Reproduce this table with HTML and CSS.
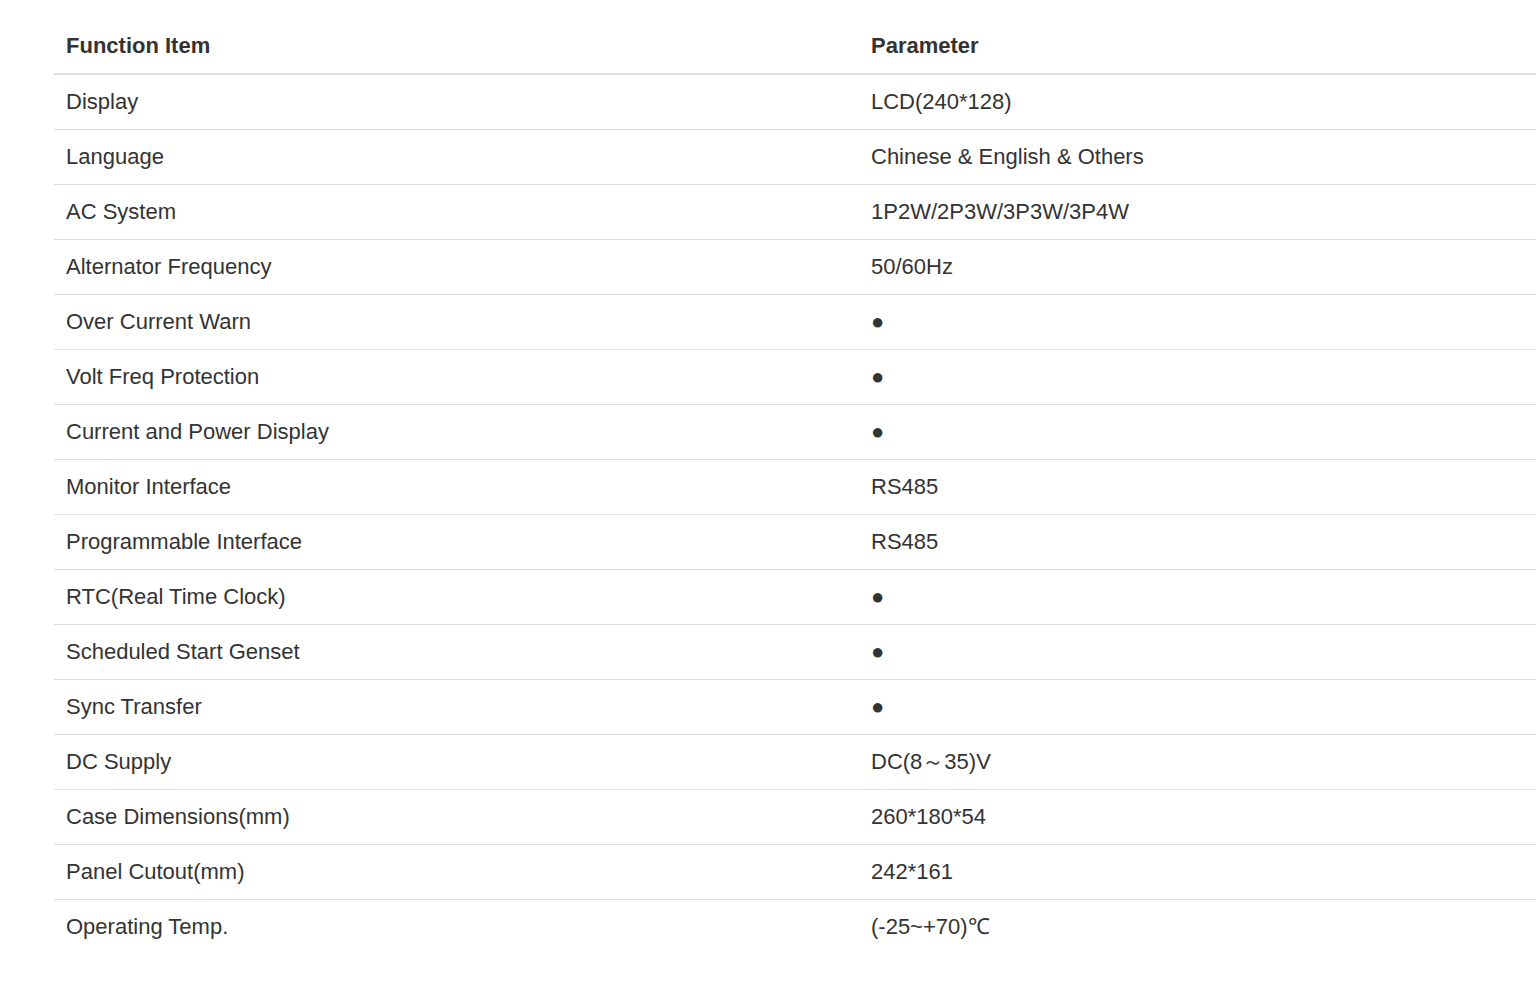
FILE: index.html
```html
<!DOCTYPE html>
<html lang="en">
<head>
    <meta charset="UTF-8">
    <meta name="viewport" content="width=device-width, initial-scale=1.0">
    <title>Function Parameters</title>
    <link rel="stylesheet" href="styles.css">
</head>
<body>

    <div class="container">
        <table class="spec-table">
            <thead>
                <tr>
                    <th class="col-item">Function Item</th>
                    <th>Parameter</th>
                </tr>
            </thead>
            <tbody>
                <tr><td>Display</td><td>LCD(240*128)</td></tr>
                <tr><td>Language</td><td>Chinese &amp; English &amp; Others</td></tr>
                <tr><td>AC System</td><td>1P2W/2P3W/3P3W/3P4W</td></tr>
                <tr><td>Alternator Frequency</td><td>50/60Hz</td></tr>
                <tr><td>Over Current Warn</td><td>●</td></tr>
                <tr><td>Volt Freq Protection</td><td>●</td></tr>
                <tr><td>Current and Power Display</td><td>●</td></tr>
                <tr><td>Monitor Interface</td><td>RS485</td></tr>
                <tr><td>Programmable Interface</td><td>RS485</td></tr>
                <tr><td>RTC(Real Time Clock)</td><td>●</td></tr>
                <tr><td>Scheduled Start Genset</td><td>●</td></tr>
                <tr><td>Sync Transfer</td><td>●</td></tr>
                <tr><td>DC Supply</td><td>DC(8～35)V</td></tr>
                <tr><td>Case Dimensions(mm)</td><td>260*180*54</td></tr>
                <tr><td>Panel Cutout(mm)</td><td>242*161</td></tr>
                <tr><td>Operating Temp.</td><td>(-25~+70)℃</td></tr>
            </tbody>
        </table>
    </div>

</body>
</html>
```

FILE: styles.css
```css
body {
    font-family: "Liberation Sans", Arial, sans-serif;
    margin: 0;
    background-color: #fff;
    color: #333;
    overflow: hidden;
}
.container {
    padding: 19px 0 0 54px;
}
.spec-table {
    width: 100%;
    border-collapse: collapse;
    font-size: 22px;
    line-height: 24px;
}
.spec-table th,
.spec-table td {
    height: 55px;
    padding: 0 12px;
    text-align: left;
    vertical-align: middle;
    box-sizing: border-box;
}
.spec-table th {
    font-weight: bold;
    border-bottom: 2px solid #ddd;
}
.spec-table td {
    border-top: 1px solid #ddd;
}
.spec-table thead + tbody tr:first-child td {
    border-top: none;
}
.col-item {
    width: 805px;
}
```
